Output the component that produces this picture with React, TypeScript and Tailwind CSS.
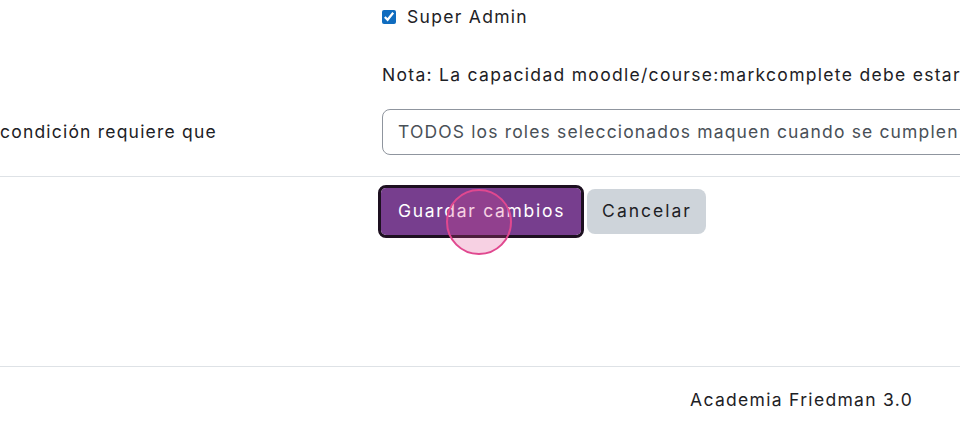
import React from "react";

export default function App() {
  const font = { fontFamily: "Inter, 'Noto Sans', sans-serif" };
  return (
    <div className="relative w-[960px] h-[434px] overflow-hidden bg-white text-[#1d2125]" style={font}>
      <div className="flex flex-col">
        {/* checkbox row */}
        <div className="flex h-[34px] items-center pl-[382px]">
          <input type="checkbox" defaultChecked className="w-[14px] h-[14px] accent-[#0f6cbf] m-0" />
          <span className="ml-[11px] text-[17.5px] tracking-[1.3px]">Super Admin</span>
        </div>
        {/* nota */}
        <div className="flex h-[82px] items-center pl-[382px]">
          <span className="whitespace-nowrap text-[17.5px] tracking-[1.3px]">
            Nota: La capacidad moodle/course:markcomplete debe estar
          </span>
        </div>
        {/* condition row */}
        <div className="flex items-center h-[46px] -mt-[7px]">
          <div className="w-[382px] shrink-0 text-[17.5px] tracking-[1.2px] whitespace-nowrap">condición requiere que</div>
          <div className="flex-1 min-w-0 overflow-hidden">
            <div className="h-[46px] w-[800px] rounded-[8px] border border-[#8f959e] flex items-center pl-[15px] text-[17.5px] tracking-[1.15px] text-[#495057] whitespace-nowrap overflow-hidden">
              TODOS los roles seleccionados maquen cuando se cumplen
            </div>
          </div>
        </div>
        {/* hr */}
        <div className="mt-[21px] border-t border-[#dee2e6]" />
        {/* buttons */}
        <div className="flex items-center gap-[3px] pl-[378px] mt-[8px]">
          <div className="rounded-[8px] border-[3px] border-[#1d1020]">
            <button className="h-[47px] pl-[17px] pr-[16px] rounded-[5px] bg-[#773e8e] text-white text-[17.5px] tracking-[1.7px]">
              Guardar cambios
            </button>
          </div>
          <button className="h-[45px] pl-[15px] pr-[14px] rounded-[8px] bg-[#ced4da] text-[#1d2125] text-[17.5px] tracking-[2px]">
            Cancelar
          </button>
        </div>
        {/* footer */}
        <div className="mt-[128px] border-t border-[#dee2e6]" />
        <div className="flex justify-end pr-[47px] h-[67px] items-center">
          <span className="text-[17.5px] tracking-[1.3px]">Academia Friedman 3.0</span>
        </div>
      </div>
      {/* click indicator */}
      <div className="absolute left-[446px] top-[189px] w-[66px] h-[66px] rounded-full border-2 border-[#e0488f] bg-[#e0488f]/25" />
    </div>
  );
}
